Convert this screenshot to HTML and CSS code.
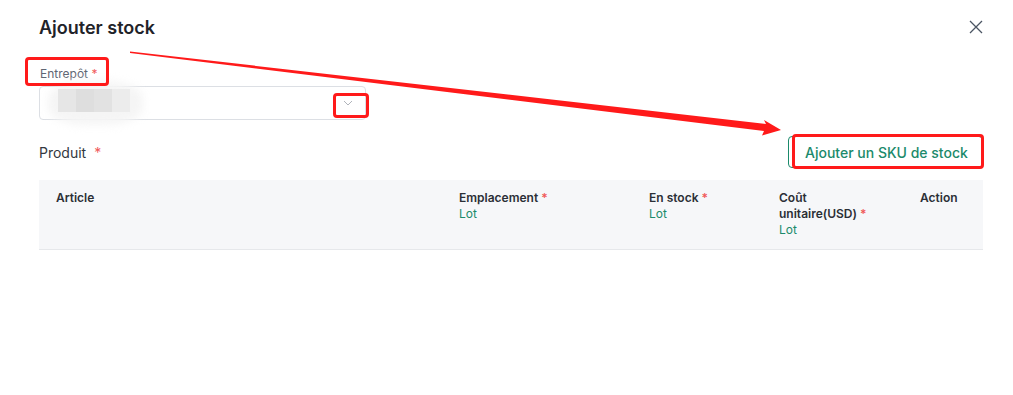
FILE: index.html
```html
<!DOCTYPE html>
<html lang="fr">
<head>
    <meta charset="UTF-8">
    <title>Ajouter stock</title>
    <link rel="stylesheet" href="styles.css">
</head>
<body>
    <div class="modal">
        <header class="modal-head">
            <h1>Ajouter stock</h1>
            <button class="close-btn" aria-label="Fermer">
                <svg width="14" height="14" viewBox="0 0 14 14"><path d="M1 1L13 13M13 1L1 13" stroke="#4b5563" stroke-width="1.3" fill="none"/></svg>
            </button>
        </header>

        <div class="field">
            <label class="field-label">Entrepôt <span class="req">*</span></label>
            <div class="select">
                <div class="select-value">
                    <span class="blur-a"></span><span class="blur-b"></span><span class="blur-c"></span><span class="blur-d"></span>
                </div>
                <svg class="chevron" width="10" height="6" viewBox="0 0 10 6"><path d="M1 1L5 5L9 1" stroke="#b0b4bb" stroke-width="1" fill="none"/></svg>
            </div>
        </div>

        <div class="product-row">
            <div class="product-label">Produit <span class="req">*</span></div>
            <button class="sku-btn">Ajouter un SKU de stock</button>
        </div>

        <div class="table-head">
            <div class="col col-article"><b>Article</b></div>
            <div class="col col-place"><b>Emplacement <span class="req">*</span></b><span class="lot">Lot</span></div>
            <div class="col col-stock"><b>En stock <span class="req">*</span></b><span class="lot">Lot</span></div>
            <div class="col col-cost"><b>Coût<br>unitaire(USD) <span class="req">*</span></b><span class="lot">Lot</span></div>
            <div class="col col-action"><b>Action</b></div>
        </div>
    </div>

    <!-- annotations -->
    <div class="mark mark-label"></div>
    <div class="mark mark-chevron"></div>
    <div class="mark mark-btn"></div>
    <svg class="arrow" width="1013" height="395" viewBox="0 0 1013 395">
        <polygon points="130,51.5 766,124 764,120 781,130 762,135.5 764,131 130,53" fill="#ff1a1a"/>
    </svg>
</body>
</html>
```

FILE: styles.css
```css
* {
    margin: 0;
    padding: 0;
    box-sizing: border-box;
}

body {
    font-family: Inter, "Noto Sans", sans-serif;
    background: #fff;
    color: #1f2329;
    width: 1013px;
    height: 395px;
    overflow: hidden;
    position: relative;
}

.modal {
    padding: 14px 30px 0 39px;
}

.modal-head {
    display: flex;
    justify-content: space-between;
    align-items: center;
    height: 26px;
}

.modal-head h1 {
    font-size: 18px;
    font-weight: 600;
    color: #1f2329;
}

.close-btn {
    background: none;
    border: none;
    width: 14px;
    height: 14px;
    display: flex;
}

.field {
    margin-top: 27px;
}

.field-label {
    display: block;
    font-size: 12px;
    color: #5f6673;
    line-height: 14px;
    padding-left: 1px;
}

.req {
    color: #f05a5a;
}

.select {
    margin-top: 5px;
    width: 327px;
    height: 34px;
    border: 1px solid #dcdfe4;
    border-radius: 4px;
    display: flex;
    align-items: center;
    justify-content: space-between;
    padding-right: 12px;
}

.select-value {
    display: flex;
    height: 32px;
    margin-left: 18px;
    position: relative;
}

.select-value::before {
    content: "";
    position: absolute;
    left: -10px;
    top: -6px;
    width: 95px;
    height: 44px;
    border-radius: 40%;
    background: #f5f5f5;
    filter: blur(4px);
}

.select-value span {
    width: 18px;
    height: 23px;
    margin-top: 2px;
    position: relative;
}

.blur-a { background: #e6e6e6; }
.blur-b { background: #dedede; }
.blur-c { background: #e2e2e2; }
.blur-d { background: #ececec; }

.product-row {
    display: flex;
    justify-content: space-between;
    align-items: center;
    margin-top: 16px;
}

.product-label {
    font-size: 14px;
    color: #333840;
}

.product-label .req {
    margin-left: 4px;
}

.sku-btn {
    font-family: inherit;
    font-size: 14px;
    font-weight: 500;
    color: #1b8a6b;
    background: #fff;
    border: 1px solid #1b8a6b;
    border-radius: 4px;
    height: 32px;
    width: 195px;
    padding: 0 0 0 16px;
    text-align: left;
    white-space: nowrap;
}

.table-head {
    margin-top: 12px;
    width: 944px;
    height: 70px;
    background: #f6f7f9;
    border-bottom: 1px solid #e6e8eb;
    display: flex;
    padding-top: 10px;
    font-size: 12px;
    line-height: 16px;
}

.col b {
    display: block;
    font-weight: 600;
    color: #2b2f36;
}

.lot {
    display: block;
    color: #1b8a6b;
}

.col-article { width: 420px; padding-left: 17px; }
.col-place { width: 190px; }
.col-stock { width: 130px; }
.col-cost { width: 141px; }
.col-action { flex: 1; }

.mark {
    position: absolute;
    border: 3px solid #ff1a1a;
    border-radius: 4px;
}

.mark-label {
    left: 25px;
    top: 57px;
    width: 84px;
    height: 29px;
}

.mark-chevron {
    left: 333px;
    top: 93px;
    width: 36px;
    height: 25px;
}

.mark-btn {
    left: 792px;
    top: 134px;
    width: 192px;
    height: 35px;
}

.arrow {
    position: absolute;
    left: 0;
    top: 0;
}
```
